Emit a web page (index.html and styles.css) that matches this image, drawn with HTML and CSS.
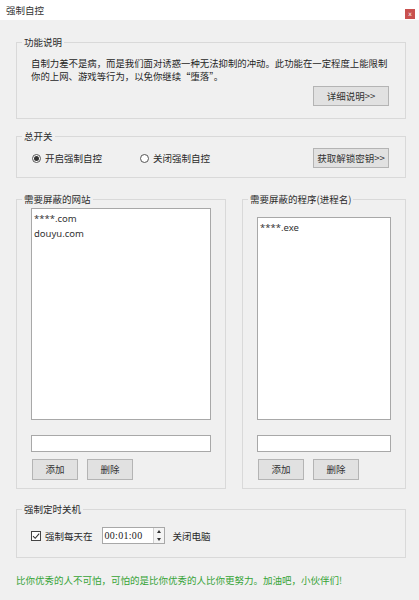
FILE: index.html
```html
<!DOCTYPE html>
<html lang="zh-CN">
<head>
<meta charset="utf-8">
<title>强制自控</title>
<link rel="stylesheet" href="styles.css">
</head>
<body>
<div class="window">
  <div class="titlebar">
    <span class="title">强制自控</span>
    <span class="close">x</span>
  </div>
  <div class="content">
    <fieldset class="group g-intro">
      <legend>功能说明</legend>
      <p class="desc">自制力差不是病，而是我们面对诱惑一种无法抑制的冲动。此功能在一定程度上能限制<br>你的上网、游戏等行为，以免你继续“堕落”。</p>
      <div class="row-end"><button class="btn btn-wide">详细说明&gt;&gt;</button></div>
    </fieldset>

    <fieldset class="group g-switch">
      <legend>总开关</legend>
      <div class="switch-row">
        <label class="radio radio-first on"><span class="dot"></span>开启强制自控</label>
        <label class="radio"><span class="dot"></span>关闭强制自控</label>
        <button class="btn btn-wide push">获取解锁密钥&gt;&gt;</button>
      </div>
    </fieldset>

    <div class="lists">
      <fieldset class="group g-list g-sites">
        <legend>需要屏蔽的网站</legend>
        <div class="listbox lb-sites">
          <div class="item">****.com</div>
          <div class="item">douyu.com</div>
        </div>
        <div class="textbox"></div>
        <div class="btn-row">
          <button class="btn btn-small">添加</button>
          <button class="btn btn-small">删除</button>
        </div>
      </fieldset>
      <fieldset class="group g-list g-procs">
        <legend>需要屏蔽的程序(进程名)</legend>
        <div class="listbox lb-procs">
          <div class="item">****.exe</div>
        </div>
        <div class="textbox"></div>
        <div class="btn-row">
          <button class="btn btn-small">添加</button>
          <button class="btn btn-small">删除</button>
        </div>
      </fieldset>
    </div>

    <fieldset class="group g-timer">
      <legend>强制定时关机</legend>
      <div class="timer-row">
        <label class="check">
          <span class="box"><svg width="10" height="10" viewBox="0 0 10 10"><path d="M2 5.2 L4.2 7.3 L8.2 2.6" fill="none" stroke="#333" stroke-width="1.1"/></svg></span>
          强制每天在
        </label>
        <div class="timebox">
          <span class="time">00:01:00</span>
          <span class="spin"><span class="up"></span><span class="down"></span></span>
        </div>
        <span class="after">关闭电脑</span>
      </div>
    </fieldset>

    <p class="motto">比你优秀的人不可怕，可怕的是比你优秀的人比你更努力。加油吧，小伙伴们!</p>
  </div>
</div>
</body>
</html>
```

FILE: styles.css
```css
* { box-sizing: border-box; }

html, body {
  margin: 0;
  padding: 0;
  background: #f0f0f0;
}

body {
  font-family: "Noto Sans CJK SC", "Noto Sans", sans-serif;
  font-size: 9.5px;
  line-height: 12px;
  color: #262626;
}

.window {
  width: 419px;
  height: 600px;
  background: #f0f0f0;
  overflow: hidden;
}

.titlebar {
  height: 20px;
  background: #ffffff;
  display: flex;
  justify-content: space-between;
  align-items: flex-start;
  padding: 0 4px 0 6px;
}

.title {
  margin-top: 4px;
  color: #333;
}

.close {
  margin-top: 9px;
  width: 10px;
  height: 10px;
  background: #c9514f;
  color: #fff;
  font-family: "DejaVu Sans", sans-serif;
  font-size: 6px;
  line-height: 9px;
  text-align: center;
}

.content {
  padding: 0 13px 0 16px;
  display: flex;
  flex-direction: column;
}

.group {
  margin: 0;
  border: 1px solid #d9d9d9;
  min-width: 0;
  padding: 0 16px 0 14px;
}

.group legend {
  padding: 0 2px;
  margin-left: -9px;
  line-height: 12px;
  height: 12px;
  color: #2a2a2a;
}

.g-intro {
  margin-top: 16px;
  padding-top: 9px;
  padding-bottom: 12px;
}

.desc {
  margin: 0;
  font-size: 9.4px;
  line-height: 13px;
  white-space: nowrap;
}

.row-end {
  display: flex;
  justify-content: flex-end;
  margin-top: 3px;
}

.btn {
  font: inherit;
  color: #333;
  background: #e1e1e1;
  border: 1px solid #b4b4b4;
  border-radius: 0;
  padding: 0;
  margin: 0;
  text-align: center;
}

.btn-wide {
  width: 76px;
  height: 20px;
  line-height: 18px;
}

.btn-small {
  width: 46px;
  height: 21px;
  line-height: 19px;
}

.g-switch {
  margin-top: 11px;
  padding-top: 6px;
  padding-bottom: 9px;
}

.switch-row {
  display: flex;
  align-items: center;
  height: 20px;
}

.radio {
  display: flex;
  align-items: center;
  color: #2a2a2a;
}

.radio-first {
  width: 108px;
  margin-left: 1px;
}

.radio .dot {
  width: 9px;
  height: 9px;
  border: 1px solid #555;
  border-radius: 50%;
  margin-right: 4px;
  display: flex;
  align-items: center;
  justify-content: center;
  background: #fff;
}

.radio.on .dot::after {
  content: "";
  width: 5px;
  height: 5px;
  border-radius: 50%;
  background: #333;
}

.push { margin-left: auto; }

.lists {
  margin-top: 15px;
  display: flex;
  gap: 16px;
}

.g-list {
  padding-left: 14px;
  padding-right: 14px;
  padding-bottom: 8px;
}

.g-sites {
  width: 210px;
  padding-top: 3px;
}

.g-procs {
  flex: 1;
  padding-top: 12px;
}

.listbox {
  background: #fff;
  border: 1px solid #a8a8a8;
  padding: 2px 2px;
}

.lb-sites { height: 212px; }
.lb-procs { height: 203px; }

.item {
  font-family: "Noto Sans", "Noto Sans CJK SC", sans-serif;
  font-size: 9.5px;
  line-height: 15px;
  color: #333;
}

.textbox {
  margin-top: 15px;
  height: 17px;
  background: #fff;
  border: 1px solid #a8a8a8;
}

.btn-row {
  margin-top: 7px;
  display: flex;
  gap: 9px;
  padding-left: 1px;
}

.g-timer {
  margin-top: 14px;
  padding-top: 12px;
  padding-bottom: 13px;
}

.timer-row {
  display: flex;
  align-items: center;
  height: 17px;
}

.check {
  display: flex;
  align-items: center;
  color: #2a2a2a;
}

.check .box {
  width: 10px;
  height: 10px;
  border: 1px solid #444;
  background: #fff;
  margin-right: 4px;
  display: flex;
}

.check .box svg {
  margin: -1px;
}

.timebox {
  margin-left: 9px;
  width: 63px;
  height: 17px;
  background: #fff;
  border: 1px solid #a8a8a8;
  display: flex;
}

.time {
  flex: 1;
  font-family: "Liberation Serif", serif;
  font-size: 10px;
  line-height: 15px;
  padding-left: 2px;
  letter-spacing: 0.3px;
  color: #222;
}

.spin {
  width: 11px;
  display: flex;
  flex-direction: column;
  border-left: 1px solid #d0d0d0;
  background: #f4f4f4;
}

.spin .up, .spin .down {
  flex: 1;
  display: flex;
  align-items: center;
  justify-content: center;
}

.spin .up::after {
  content: "";
  border-left: 2px solid transparent;
  border-right: 2px solid transparent;
  border-bottom: 3px solid #333;
}

.spin .down::after {
  content: "";
  border-left: 2px solid transparent;
  border-right: 2px solid transparent;
  border-top: 3px solid #333;
}

.after {
  margin-left: 8px;
  color: #2a2a2a;
}

.motto {
  margin: 16px 0 0 0;
  color: #36a336;
  line-height: 12px;
}
```
